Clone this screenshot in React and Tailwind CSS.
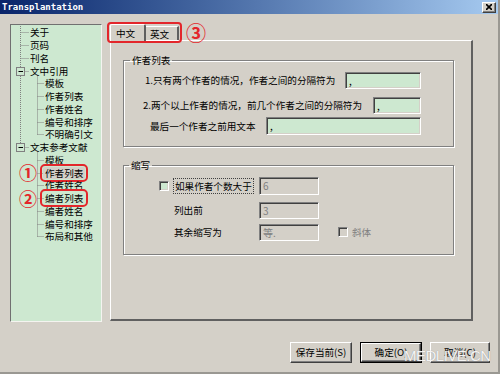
const tree = [
  { t: '关于', l: 1 },
  { t: '页码', l: 1 },
  { t: '刊名', l: 1 },
  { t: '文中引用', l: 1, box: true },
  { t: '模板', l: 2 },
  { t: '作者列表', l: 2 },
  { t: '作者姓名', l: 2 },
  { t: '编号和排序', l: 2 },
  { t: '不明确引文', l: 2 },
  { t: '文末参考文献', l: 1, box: true },
  { t: '模板', l: 2 },
  { t: '作者列表', l: 2, sel: true, mark: '①' },
  { t: '作者姓名', l: 2 },
  { t: '编者列表', l: 2, mark: '②' },
  { t: '编者姓名', l: 2 },
  { t: '编号和排序', l: 2 },
  { t: '布局和其他', l: 2 },
]

const ROW = 12.75
const cy = (i) => Math.round(1 + 6.375 + ROW * i) + 0.5

function TreeLines() {
  return (
    <svg className="absolute inset-0" width="90" height="296" stroke="#808080" strokeDasharray="1 1" fill="none">
      <line x1="9.5" y1="1" x2="9.5" y2={cy(9)} />
      <line x1="26.5" y1={cy(3) + 4} x2="26.5" y2={cy(8)} />
      <line x1="26.5" y1={cy(9) + 4} x2="26.5" y2={cy(16)} />
      {tree.map((r, i) => (
        r.l === 1
          ? <line key={i} x1={r.box ? 13.5 : 9.5} y1={cy(i)} x2="18" y2={cy(i)} />
          : <line key={i} x1="26.5" y1={cy(i)} x2="33" y2={cy(i)} />
      ))}
      {tree.map((r, i) => r.box && (
        <g key={'b' + i} strokeDasharray="none">
          <rect x="5.5" y={cy(i) - 4} width="8" height="8" fill="#cde8d0" />
          <line x1="7.5" y1={cy(i)} x2="12" y2={cy(i)} stroke="#000" />
        </g>
      ))}
    </svg>
  )
}

const sunken = 'border border-t-[#808080] border-l-[#808080] border-b-white border-r-white shadow-[inset_1px_1px_0_#404040,inset_-1px_-1px_0_#d4d0c8]'
const raised = 'border border-t-white border-l-white border-b-[#404040] border-r-[#404040] shadow-[inset_-1px_-1px_0_#808080]'

function Field({ w, h = 17, value, disabled }) {
  return (
    <div className={`${sunken} ${disabled ? 'bg-[#d4d0c8] text-[#808080]' : 'bg-[#cde8d0] text-black'} flex items-center pl-[3px] text-[10px] leading-none shrink-0`} style={{ width: w, height: h }}>
      {value}
    </div>
  )
}

function Check({ disabled }) {
  return <div className={`${sunken} w-[10px] h-[10px] ${disabled ? 'bg-[#d4d0c8]' : 'bg-[#cde8d0]'}`} />
}

export default function App() {
  return (
    <div className="w-[500px] h-[374px] bg-[#d4d0c8] border-r-2 border-b-2 border-[#9a9892] flex flex-col relative overflow-hidden font-['Noto_Sans_CJK_SC',sans-serif] text-[9.6px] text-black">
      <div className="h-[14px] shrink-0 flex items-center justify-between bg-gradient-to-r from-[#0a246a] to-[#a6caf0] pl-[2px] pr-[2px]">
        <span className="font-['DejaVu_Sans_Mono',monospace] font-bold text-[9px] leading-none text-white">Transplantation</span>
        <div className={`${raised} bg-[#d4d0c8] w-[14px] h-[11px] flex items-center justify-center`}>
          <svg width="6" height="6" viewBox="0 0 6 6" stroke="#000" strokeWidth="1.6">
            <path d="M0 0L6 6M6 0L0 6" />
          </svg>
        </div>
      </div>

      <div className="h-[308px] shrink-0 flex pt-[10px] pl-[10px]">
        <div className="relative w-[92px] h-[298px] bg-[#cde8d0] border border-t-[#707070] border-l-[#707070] border-b-[#f4f4f0] border-r-[#f4f4f0] pt-[1px]">
          <TreeLines />
          {tree.map((r, i) => (
            <div key={i} className={`relative h-[12.75px] flex items-center ${r.l === 1 ? 'pl-[19px]' : 'pl-[32px]'}`}>
              {r.mark && (
                <span className="absolute left-[8px] top-[-3px] text-[18px] font-bold leading-none text-[#e3262b]">{r.mark}</span>
              )}
              <span className={`leading-[12px] ${r.l === 2 ? 'px-[2px]' : ''} ${r.sel ? 'bg-[#d4d0c8]' : ''} ${r.mark ? 'outline-2 outline-[#e3262b] outline-offset-[1px] rounded-[2px]' : ''}`}>
                {r.t}
              </span>
            </div>
          ))}
        </div>

        <div className="ml-[8px] w-[363px] flex flex-col">
          <div className="relative h-[16px] flex items-end">
            <div className="relative z-10 w-[36px] h-[17px] -mb-[1px] bg-[#d4d0c8] border-t border-l border-t-white border-l-white border-r-2 border-r-[#606060] rounded-t-[2px] flex justify-center pt-[2px] pr-[4px] leading-[12px]">
              中文
            </div>
            <div className="w-[33px] h-[14px] bg-[#d4d0c8] border-t border-t-white border-r-2 border-r-[#606060] pl-[4px] pt-[1px] leading-[12px]">
              英文
            </div>
            <div className="absolute left-[-3px] top-[-2px] w-[75px] h-[21px] border-2 border-[#e3262b] rounded-[4px]" />
            <span className="absolute left-[76px] top-[-1px] text-[20px] font-bold leading-none text-[#e3262b]">③</span>
          </div>

          <div className="h-[281px] border border-t-white border-l-white border-r-2 border-b-2 border-r-[#606060] border-b-[#606060] pt-[13px] pl-[12px]">
            <fieldset className="w-[331px] border border-[#808080] shadow-[1px_1px_0_#fff,inset_1px_1px_0_#fff] pr-[32px] pb-[11px]">
              <legend className="ml-[6px] px-[2px] leading-[12px]">作者列表</legend>
              <div className="flex items-center mt-[6px] pl-[21px]">
                <span>1.只有两个作者的情况，作者之间的分隔符为</span>
                <div className="ml-auto"><Field w={76} value="," /></div>
              </div>
              <div className="flex items-center mt-[8px] pl-[19px]">
                <span>2.两个以上作者的情况，前几个作者之间的分隔符为</span>
                <div className="ml-auto"><Field w={48} value="," /></div>
              </div>
              <div className="flex items-center mt-[3px] pl-[26px]">
                <span>最后一个作者之前用文本</span>
                <div className="ml-auto"><Field w={155} h={18} value="," /></div>
              </div>
            </fieldset>

            <fieldset className="w-[331px] mt-[12px] border border-[#808080] shadow-[1px_1px_0_#fff,inset_1px_1px_0_#fff] pb-[13px]">
              <legend className="ml-[5px] px-[2px] leading-[12px]">缩写</legend>
              <div className="flex items-center mt-[6px] pl-[35px]">
                <div className="w-[14px]"><Check /></div>
                <div className="w-[86px]">
                  <span className="border border-dotted border-[#404040] px-[1px] leading-[10px]">如果作者个数大于</span>
                </div>
                <Field w={60} h={18} value="6" disabled />
              </div>
              <div className="flex items-center mt-[7px] pl-[35px]">
                <div className="w-[15px]" />
                <div className="w-[85px]">列出前</div>
                <Field w={60} value="3" disabled />
              </div>
              <div className="flex items-center mt-[5px] pl-[35px]">
                <div className="w-[15px]" />
                <div className="w-[85px]">其余缩写为</div>
                <Field w={60} value="等." disabled />
                <div className="ml-[19px] flex items-center gap-[4px] text-[#808080]">
                  <Check disabled />
                  <span>斜体</span>
                </div>
              </div>
            </fieldset>
          </div>
        </div>
      </div>

      <div className="mt-[20px] h-[21px] flex justify-end gap-[8px] pr-[8px]">
        <button className={`${raised} w-[62px] h-[21px] bg-[#d4d0c8] leading-none`}>保存当前(S)</button>
        <div className="border border-black">
          <button className={`${raised} w-[60px] h-[19px] bg-[#d4d0c8] leading-none`}>确定(O)</button>
        </div>
        <button className={`${raised} w-[60px] h-[21px] bg-[#d4d0c8] leading-none`}>取消(C)</button>
      </div>

      <span className="absolute left-[404px] top-[348px] font-['Liberation_Sans',sans-serif] text-[15px] leading-none tracking-[-0.5px] text-white/90 [text-shadow:0_0_1px_#888]">
        MEDLIVE.CN
      </span>
    </div>
  )
}
